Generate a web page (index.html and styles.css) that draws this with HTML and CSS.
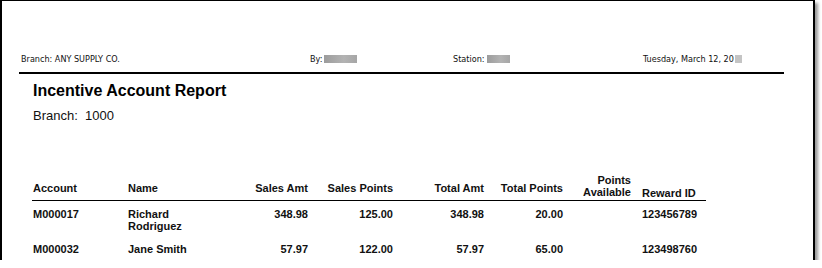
FILE: index.html
```html
<!DOCTYPE html>
<html>
<head>
<meta charset="utf-8">
<link rel="stylesheet" href="styles.css">
</head>
<body>
<div class="frame">
  <div class="pagehead">
    <div>Branch: ANY SUPPLY CO.</div>
    <div>By:<span class="redact by"></span></div>
    <div>Station:<span class="redact st"></span></div>
    <div>Tuesday, March 12, 20<span class="redact yr"></span></div>
  </div>
  <h1 class="title">Incentive Account Report</h1>
  <p class="branch">Branch:&nbsp; 1000</p>
  <table class="report">
    <colgroup>
      <col class="c-acct"><col class="c-name"><col class="c-samt"><col class="c-spts"><col class="c-tamt"><col class="c-tpts"><col class="c-pavl"><col class="c-rid">
    </colgroup>
    <thead>
      <tr>
        <th class="left acct">Account</th>
        <th class="left">Name</th>
        <th>Sales Amt</th>
        <th>Sales Points</th>
        <th>Total Amt</th>
        <th>Total Points</th>
        <th class="avail">Points<br>Available</th>
        <th class="left rid">Reward ID</th>
      </tr>
    </thead>
    <tbody>
      <tr>
        <td class="left acct">M000017</td>
        <td class="left">Richard Rodriguez</td>
        <td>348.98</td>
        <td>125.00</td>
        <td>348.98</td>
        <td>20.00</td>
        <td></td>
        <td class="left rid">123456789</td>
      </tr>
      <tr>
        <td class="left acct">M000032</td>
        <td class="left">Jane Smith</td>
        <td>57.97</td>
        <td>122.00</td>
        <td>57.97</td>
        <td>65.00</td>
        <td></td>
        <td class="left rid">123498760</td>
      </tr>
    </tbody>
  </table>
</div>
</body>
</html>
```

FILE: styles.css
```css
html, body {
  margin: 0;
  padding: 0;
  background: #fff;
}

.frame {
  box-sizing: border-box;
  width: 815px;
  height: 260px;
  border-top: 1px solid #000;
  border-left: 2px solid #000;
  border-right: 2px solid #000;
  box-shadow: 3px 3px 3px rgba(0, 0, 0, 0.4);
  padding-top: 52px;
  overflow: hidden;
  background: #fff;
}

.pagehead {
  box-sizing: border-box;
  margin-left: 17px;
  width: 765px;
  padding: 0 0 7px 2px;
  display: grid;
  grid-template-columns: 289px 143px 190px 1fr;
  font-family: "Liberation Sans Narrow", "DejaVu Sans Condensed", "Roboto Condensed", "Liberation Sans", sans-serif;
  font-stretch: condensed;
  font-size: 9px;
  line-height: 12px;
  color: #111;
  border-bottom: 2px solid #000;
}

.redact {
  display: inline-block;
  vertical-align: -1px;
  height: 8px;
  background: linear-gradient(90deg, #9c9c9c, #b3b3b3 60%, #a6a6a6);
}

.redact.by { width: 33px; margin-left: 2px; }
.redact.st { width: 23px; margin-left: 2px; }
.redact.yr { width: 7px; margin-left: 1px; background: #c4c4c4; }

.title {
  margin: 8px 0 0 31px;
  font-family: "Liberation Sans", Arial, sans-serif;
  font-weight: bold;
  font-size: 16px;
  line-height: 18px;
  color: #000;
}

.branch {
  margin: 8px 0 0 31px;
  font-family: "Liberation Sans", Arial, sans-serif;
  font-size: 13px;
  line-height: 15px;
  color: #111;
}

.report {
  margin: 51px 0 0 30px;
  width: 674px;
  table-layout: fixed;
  border-collapse: collapse;
  border-spacing: 0;
  font-family: "Liberation Sans", Arial, sans-serif;
  font-weight: bold;
  font-size: 11px;
  line-height: 12px;
  color: #111;
}

.c-acct { width: 96px; }
.c-name { width: 90px; }
.c-samt { width: 90px; }
.c-spts { width: 85px; }
.c-tamt { width: 91px; }
.c-tpts { width: 79px; }
.c-pavl { width: 68px; }
.c-rid { width: 75px; }

.report th,
.report td {
  padding: 0;
  text-align: right;
  font-weight: bold;
}

.report th {
  vertical-align: bottom;
  padding-bottom: 6px;
  border-bottom: 1px solid #000;
}

.report th.avail { padding-bottom: 2px; }
.report th.rid { padding-bottom: 1px; }

.report td {
  vertical-align: top;
  padding-top: 7px;
  padding-bottom: 4px;
}

.report .left { text-align: left; }
.report .acct { padding-left: 1px; }
.report .rid { padding-left: 11px; }
```
